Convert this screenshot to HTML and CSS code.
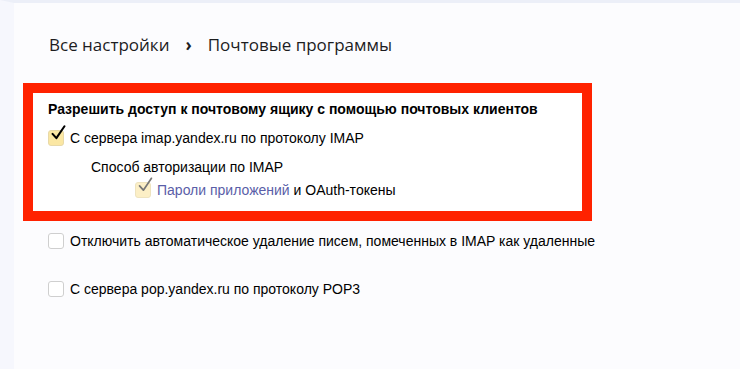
FILE: index.html
```html
<!DOCTYPE html>
<html lang="ru">
<head>
<meta charset="utf-8">
<title>Почтовые программы</title>
<link rel="stylesheet" href="styles.css">
</head>
<body>
<div class="page">
  <nav class="crumbs">
    <span class="crumb">Все настройки</span>
    <span class="sep">›</span>
    <span class="crumb">Почтовые программы</span>
  </nav>

  <section class="highlight">
    <h2 class="title">Разрешить доступ к почтовому ящику с помощью почтовых клиентов</h2>
    <label class="row">
      <span class="box checked"><svg viewBox="0 0 20 20" class="tick"><path d="M3 10.5 L7.5 15.5 L17 1.5" /></svg></span>
      <span class="text">С сервера imap.yandex.ru по протоколу IMAP</span>
    </label>
    <div class="sub">Способ авторизации по IMAP</div>
    <label class="row subrow">
      <span class="box checked dim"><svg viewBox="0 0 20 20" class="tick"><path d="M3 10.5 L7.5 15.5 L17 1.5" /></svg></span>
      <span class="text"><a class="link">Пароли приложений</a> и OAuth-токены</span>
    </label>
  </section>

  <label class="row plain first">
    <span class="box"></span>
    <span class="text">Отключить автоматическое удаление писем, помеченных в IMAP как удаленные</span>
  </label>
  <label class="row plain second">
    <span class="box"></span>
    <span class="text">С сервера pop.yandex.ru по протоколу POP3</span>
  </label>
</div>
</body>
</html>
```

FILE: styles.css
```css
html, body {
  margin: 0;
  padding: 0;
  height: 100%;
}
body {
  background: #fcfcfe;
  font-family: "Liberation Sans", Arial, sans-serif;
  color: #000;
}
.page {
  min-height: 100%;
  box-sizing: border-box;
  border-left: 14px solid #f6f7fd;
  border-top: 3px solid #eceff8;
  padding-top: 28px;
}
.crumbs {
  display: flex;
  align-items: center;
  padding-left: 35px;
  height: 26px;
  font-family: "Open Sans", sans-serif;
  font-size: 17px;
  color: #1d1d1f;
}
.sep {
  margin: 0 16px 0 16px;
  font-weight: 700;
  font-size: 17px;
}
.highlight {
  margin: 26px 0 0 9px;
  width: 534px;
  height: 118px;
  border: 10px solid #ff2200;
  background: #fff;
  padding: 0 0 0 15px;
  box-sizing: content-box;
}
.title {
  margin: 0;
  padding-top: 7px;
  font-size: 14px;
  font-weight: 700;
  line-height: 18px;
}
.row {
  display: flex;
  align-items: center;
  font-size: 14px;
  line-height: 18px;
}
.highlight .row {
  margin-top: 11px;
}
.box {
  position: relative;
  width: 14px;
  height: 14px;
  border: 1px solid #cfcfcf;
  border-radius: 3px;
  background: #fff;
  margin-right: 6px;
  flex: none;
}
.box.checked {
  background: #fbe7a3;
  border-color: #e8d9a8;
}
.box.checked.dim {
  background: #fcefc6;
  border-color: #eee3bf;
}
.tick {
  position: absolute;
  left: 1px;
  top: -6px;
  width: 17px;
  height: 17px;
  fill: none;
  stroke: #000;
  stroke-width: 2.4;
  stroke-linecap: round;
  stroke-linejoin: round;
}
.dim .tick {
  stroke: #777;
  stroke-width: 2;
}
.sub {
  margin: 11px 0 0 43px;
  font-size: 14px;
  line-height: 18px;
}
.subrow {
  margin-left: 87px;
}
.highlight .subrow {
  margin-top: 5px;
}
.link {
  color: #5a5ea8;
}
.plain {
  margin-left: 34px;
}
.plain.first {
  margin-top: 11px;
}
.plain.second {
  margin-top: 30px;
}
```
